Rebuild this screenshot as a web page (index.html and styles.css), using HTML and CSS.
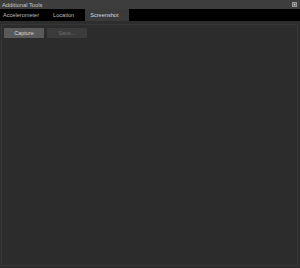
FILE: index.html
```html
<!DOCTYPE html>
<html lang="en">
<head>
    <meta charset="UTF-8">
    <meta name="viewport" content="width=device-width, initial-scale=1.0">
    <title>Additional Tools</title>
    <link rel="stylesheet" href="styles.css">
</head>
<body>

    <div class="window">
        <div class="titlebar">
            <span class="title">Additional Tools</span>
            <svg class="float-icon" width="5" height="5" viewBox="0 0 5 5">
                <rect x="0.5" y="0.5" width="4" height="4" fill="none" stroke="#9a9a9a" stroke-width="1"/>
                <rect x="1.5" y="1.5" width="2" height="2" fill="#cfcfcf"/>
            </svg>
        </div>

        <div class="tabs">
            <div class="tab">Accelerometer</div>
            <div class="tab">Location</div>
            <div class="tab active">Screenshot</div>
        </div>

        <div class="page">
            <div class="panel">
                <div class="toolbar">
                    <button class="btn">Capture</button>
                    <button class="btn" disabled>Save...</button>
                </div>
            </div>
        </div>
    </div>

</body>
</html>
```

FILE: styles.css
```css
body {
    margin: 0;
    font-family: 'Liberation Sans', Arial, sans-serif;
    background-color: #2b2b2b;
    overflow: hidden;
}

.window {
    display: flex;
    flex-direction: column;
    width: 300px;
    height: 268px;
}

/* Title bar */
.titlebar {
    height: 9px;
    display: flex;
    justify-content: space-between;
    align-items: center;
    padding: 0 3px 0 2px;
    background-color: #3d3d3d;
    color: #c8c8c8;
    font-size: 5.8px;
}
.float-icon {
    display: block;
}

/* Tabs */
.tabs {
    height: 12px;
    display: flex;
    background-color: #000;
}
.tab {
    display: flex;
    align-items: center;
    padding-left: 3px;
    color: #bdbdbd;
    font-size: 5.6px;
}
.tab + .tab {
    margin-left: 14px;
    padding-left: 0;
}
.tab.active {
    margin-left: 11px;
    padding: 0 10px 0 5px;
    background-color: #3a3a3a;
    color: #d8d8d8;
}

/* Page content */
.page {
    flex: 1;
    display: flex;
    padding: 3px 2px 2px 1px;
    background-color: #2d2d2d;
}
.panel {
    flex: 1;
    border: 1px solid #363636;
    padding: 3px 2px;
    background-color: #2b2b2b;
    background-image: repeating-conic-gradient(#2e2e2e 0 25%, #2a2a2a 0 50%);
    background-size: 2px 2px;
}
.toolbar {
    display: flex;
    gap: 3px;
}
.btn {
    width: 40px;
    height: 10px;
    padding: 0;
    border: none;
    background-color: #595959;
    color: #d6d6d6;
    font-family: inherit;
    font-size: 5.5px;
    line-height: 10px;
}
.btn:disabled {
    background-color: #3b3b3b;
    color: #6f6f6f;
}
```
